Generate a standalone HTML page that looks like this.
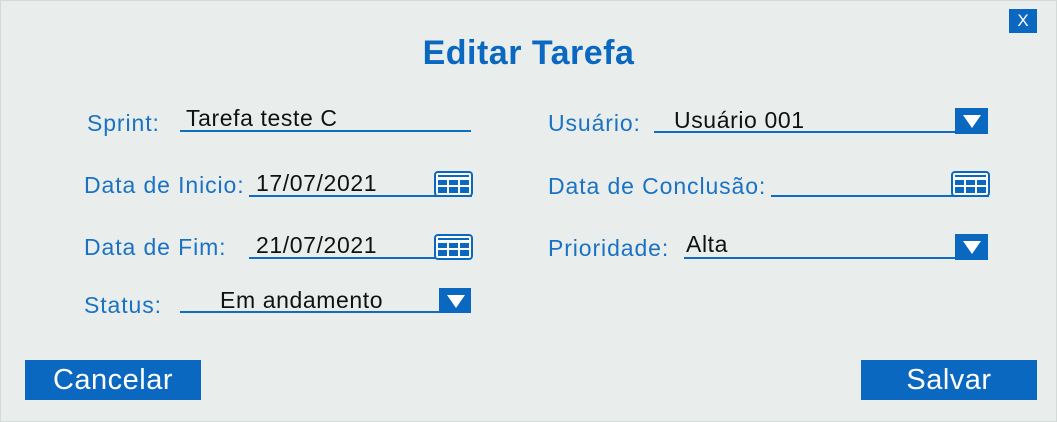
<!DOCTYPE html>
<html><head><meta charset="utf-8"><style>
body{margin:0;width:1057px;height:422px;overflow:hidden;background:#e9eeec;font-family:"Liberation Sans",sans-serif;}
.frame{position:absolute;left:0;top:0;width:1055px;height:420px;border:1px solid #d4dad8;}
.a{position:absolute;white-space:nowrap;}
.lbl{color:#1a72c4;font-size:23px;letter-spacing:0.9px;}
.val{color:#111;font-size:23px;letter-spacing:0.6px;}
.line{position:absolute;height:2px;background:#0f6cc0;}
.dd{position:absolute;width:33px;height:26px;background:#0a68c0;}
.dd:after{content:"";position:absolute;left:8px;top:7px;border-left:9px solid transparent;border-right:9px solid transparent;border-top:13px solid #fff;}
.btn{position:absolute;background:#0a68c0;color:#fff;font-size:29px;letter-spacing:0.5px;text-align:center;line-height:40px;height:40px;width:176px;top:360px;}
</style></head><body>
<div class="frame"></div>
<div class="a" style="left:1009px;top:9px;width:28px;height:24px;background:#0a68c0;color:#fff;font-size:17px;text-align:center;line-height:24px;">X</div>
<div class="a" style="left:0;width:1057px;text-align:center;top:34px;color:#0a68c0;font-size:34px;font-weight:bold;letter-spacing:0.5px;">Editar Tarefa</div>

<div class="a lbl" style="left:87px;top:110px;">Sprint:</div>
<div class="a val" style="left:186px;top:105px;">Tarefa teste C</div>
<div class="line" style="left:180px;top:130px;width:291px;"></div>

<div class="a lbl" style="left:84px;top:172px;">Data de Inicio:</div>
<div class="a val" style="left:256px;top:170px;">17/07/2021</div>
<div class="line" style="left:249px;top:195px;width:223px;"></div>

<div class="a lbl" style="left:84px;top:234px;">Data de Fim:</div>
<div class="a val" style="left:256px;top:232px;">21/07/2021</div>
<div class="line" style="left:249px;top:257px;width:223px;"></div>

<div class="a lbl" style="left:84px;top:292px;">Status:</div>
<div class="a val" style="left:220px;top:287px;">Em andamento</div>
<div class="line" style="left:180px;top:311px;width:291px;"></div>
<div class="dd" style="left:439px;top:288px;width:32px;height:25px;"></div>

<div class="a lbl" style="left:548px;top:110px;">Usuário:</div>
<div class="a val" style="left:674px;top:107px;">Usuário 001</div>
<div class="line" style="left:654px;top:131px;width:334px;"></div>
<div class="dd" style="left:955px;top:108px;"></div>

<div class="a lbl" style="left:548px;top:173px;">Data de Conclusão:</div>
<div class="line" style="left:771px;top:195px;width:218px;"></div>

<div class="a lbl" style="left:548px;top:235px;">Prioridade:</div>
<div class="a val" style="left:686px;top:231px;">Alta</div>
<div class="line" style="left:684px;top:257px;width:304px;"></div>
<div class="dd" style="left:955px;top:234px;"></div>

<svg class="a" style="left:434px;top:171px" width="39" height="26" viewBox="0 0 39 26"><rect x="1" y="1" width="37" height="24" rx="3" fill="#fff" stroke="#0a68c0" stroke-width="2"/><rect x="4" y="4" width="31" height="2" fill="#0a68c0"/><g fill="#0a68c0"><rect x="4" y="9" width="9" height="5"/><rect x="15" y="9" width="9" height="5"/><rect x="26" y="9" width="9" height="5"/><rect x="4" y="16" width="9" height="6"/><rect x="15" y="16" width="9" height="6"/><rect x="26" y="16" width="9" height="6"/></g></svg>
<svg class="a" style="left:434px;top:234px" width="39" height="26" viewBox="0 0 39 26"><rect x="1" y="1" width="37" height="24" rx="3" fill="#fff" stroke="#0a68c0" stroke-width="2"/><rect x="4" y="4" width="31" height="2" fill="#0a68c0"/><g fill="#0a68c0"><rect x="4" y="9" width="9" height="5"/><rect x="15" y="9" width="9" height="5"/><rect x="26" y="9" width="9" height="5"/><rect x="4" y="16" width="9" height="6"/><rect x="15" y="16" width="9" height="6"/><rect x="26" y="16" width="9" height="6"/></g></svg>
<svg class="a" style="left:951px;top:171px" width="39" height="26" viewBox="0 0 39 26"><rect x="1" y="1" width="37" height="24" rx="3" fill="#fff" stroke="#0a68c0" stroke-width="2"/><rect x="4" y="4" width="31" height="2" fill="#0a68c0"/><g fill="#0a68c0"><rect x="4" y="9" width="9" height="5"/><rect x="15" y="9" width="9" height="5"/><rect x="26" y="9" width="9" height="5"/><rect x="4" y="16" width="9" height="6"/><rect x="15" y="16" width="9" height="6"/><rect x="26" y="16" width="9" height="6"/></g></svg>

<div class="btn" style="left:25px;">Cancelar</div>
<div class="btn" style="left:861px;">Salvar</div>
</body></html>
